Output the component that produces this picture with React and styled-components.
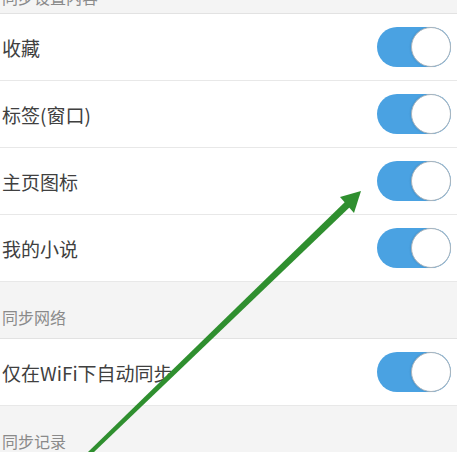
import React from "react";
import styled, { createGlobalStyle } from "styled-components";

const Global = createGlobalStyle`
  html, body { margin: 0; padding: 0; background: #f4f4f4; }
  body { font-family: "Noto Sans CJK SC", "Noto Sans", sans-serif; overflow: hidden; }
`;

const Page = styled.div`
  position: relative;
  width: 457px;
  height: 452px;
  overflow: hidden;
  background: #f4f4f4;
`;

const List = styled.div`
  display: flex;
  flex-direction: column;
  margin-top: ${(p) => p.$offset}px;
`;

const SectionHeader = styled.div`
  height: ${(p) => p.$h || 56}px;
  box-sizing: content-box;
  display: flex;
  align-items: flex-start;
  padding-left: 2px;
  background: #f4f4f4;
  border-bottom: 1px solid #e2e2e2;
  color: #8a8a8a;
  font-size: 16px;
  line-height: 20px;
`;

const HeaderText = styled.span`
  margin-top: ${(p) => p.$top || 25}px;
`;

const Row = styled.div`
  height: 66px;
  display: flex;
  align-items: center;
  justify-content: space-between;
  padding: 0 6px 0 2px;
  background: #fff;
  border-bottom: 1px solid #e8e8e8;
`;

const Label = styled.span`
  color: #404040;
  font-size: 19px;
  line-height: 24px;
  margin-top: 2px;
`;

const Switch = styled.div`
  width: 74px;
  height: 40px;
  border-radius: 20px;
  background: #4aa2e2;
  display: flex;
  justify-content: flex-end;
  box-sizing: border-box;
`;

const Knob = styled.div`
  width: 40px;
  height: 40px;
  border-radius: 50%;
  background: #fff;
  border: 1.5px solid #aab4bc;
  box-sizing: border-box;
  box-shadow: -1px 0 2px rgba(0, 0, 0, 0.08);
`;

const Arrow = styled.svg`
  position: absolute;
  left: 0;
  top: 0;
  pointer-events: none;
`;

const items = [
  { type: "row", label: "收藏" },
  { type: "row", label: "标签(窗口)" },
  { type: "row", label: "主页图标" },
  { type: "row", label: "我的小说" },
  { type: "header", label: "同步网络" },
  { type: "row", label: "仅在WiFi下自动同步" },
  { type: "header", label: "同步记录" },
];

export default function App() {
  return (
    <Page>
      <Global />
      <List $offset={-36}>
        <SectionHeader $h={49}>
          <HeaderText $top={23}>同步设置内容</HeaderText>
        </SectionHeader>
        {items.map((it, i) =>
          it.type === "row" ? (
            <Row key={i}>
              <Label>{it.label}</Label>
              <Switch>
                <Knob />
              </Switch>
            </Row>
          ) : (
            <SectionHeader key={i}>
              <HeaderText>{it.label}</HeaderText>
            </SectionHeader>
          )
        )}
      </List>
      <Arrow width="457" height="452" viewBox="0 0 457 452">
        <polygon points="88,452 93,453 352,205 347,200" fill="#2f8f2f" />
        <polygon points="361,191 340,197 354,213" fill="#2f8f2f" />
      </Arrow>
    </Page>
  );
}
